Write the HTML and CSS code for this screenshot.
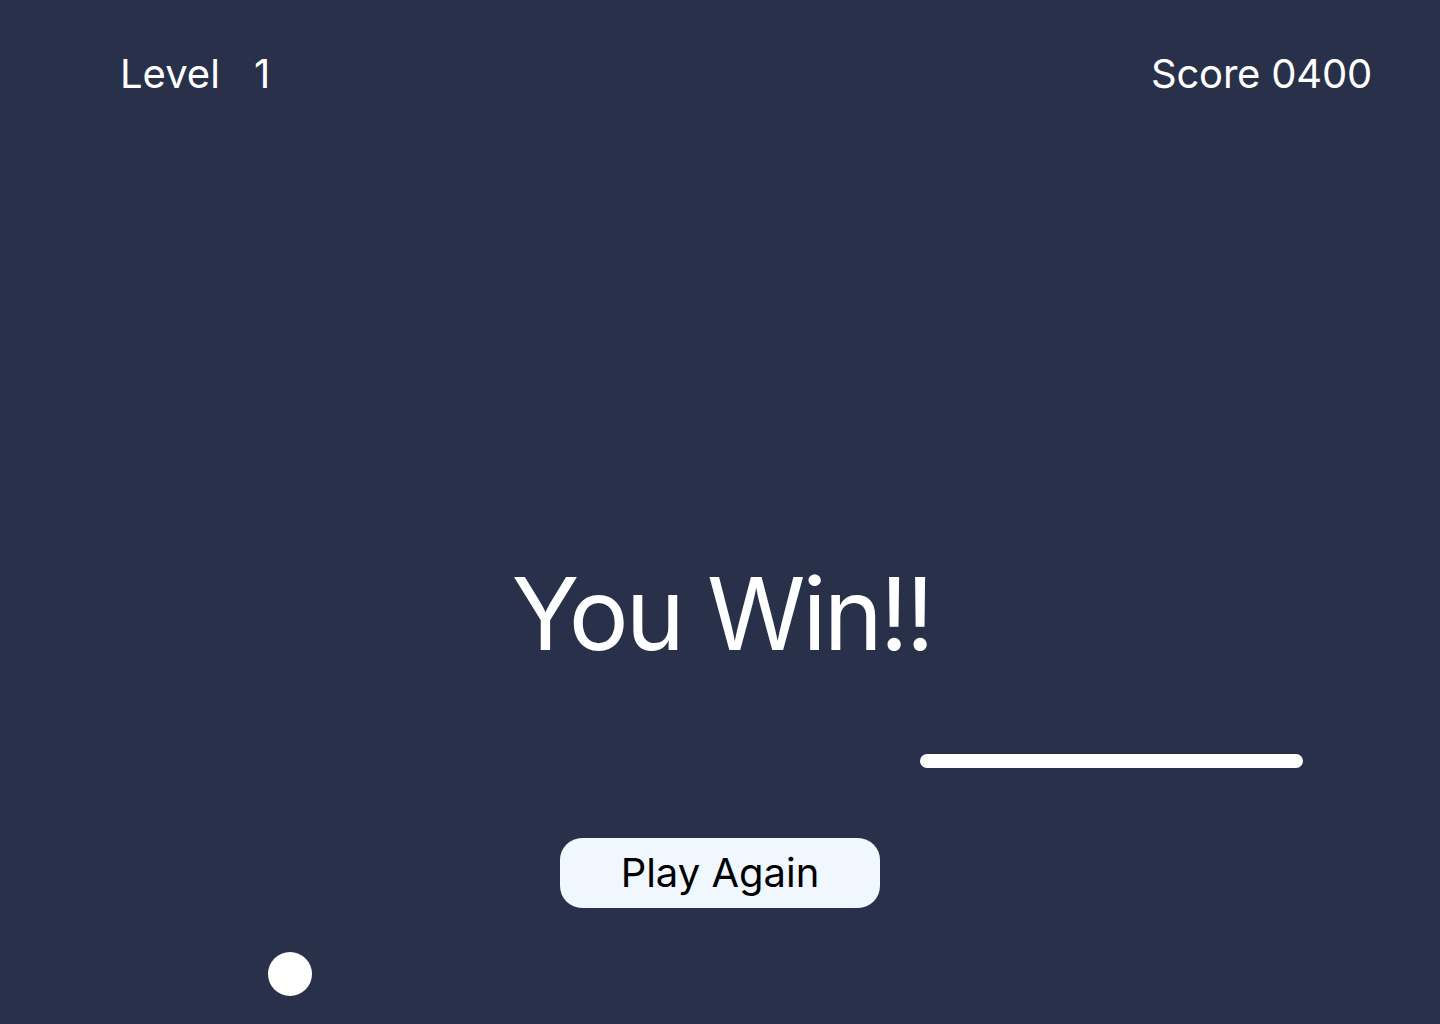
FILE: index.html
```html
<!DOCTYPE html>
<html lang="en">
<head>
<meta charset="utf-8">
<title>You Win</title>
<link rel="stylesheet" href="styles.css">
</head>
<body>
<main class="game">
  <header class="hud">
    <div class="hud-level"><span>Level</span><span>1</span></div>
    <div class="hud-score">Score 0400</div>
  </header>
  <section class="result">
    <h1 class="result-title">You Win!!</h1>
    <button class="btn-again" type="button">Play Again</button>
  </section>
  <div class="paddle"></div>
  <div class="ball"></div>
</main>
</body>
</html>
```

FILE: styles.css
```css
* { box-sizing: border-box; }
html, body { margin: 0; padding: 0; }
body {
  background: #29304a;
  font-family: Inter, "Noto Sans", sans-serif;
  color: #ffffff;
}
.game {
  position: relative;
  width: 1440px;
  height: 1024px;
  overflow: hidden;
}
.hud {
  display: flex;
  justify-content: space-between;
  padding: 54px 68px 0 120px;
  font-size: 40px;
  line-height: 40px;
}
.hud-level {
  display: flex;
  gap: 34px;
}
.hud-score {
  letter-spacing: -0.2px;
}
.result {
  display: flex;
  flex-direction: column;
  align-items: center;
  padding-top: 470px;
}
.result-title {
  margin: 0;
  padding-left: 3px;
  font-weight: 400;
  font-size: 100px;
  line-height: 100px;
  letter-spacing: -3px;
}
.btn-again {
  margin-top: 174px;
  width: 320px;
  height: 70px;
  border: none;
  border-radius: 22px;
  background: #f0f7fe;
  color: #000000;
  font-family: Inter, "Noto Sans", sans-serif;
  font-size: 40px;
  line-height: 40px;
  padding: 0;
  display: flex;
  align-items: center;
  justify-content: center;
}
.paddle {
  position: absolute;
  left: 920px;
  top: 754px;
  width: 383px;
  height: 14px;
  border-radius: 7px;
  background: #ffffff;
}
.ball {
  position: absolute;
  left: 268px;
  top: 952px;
  width: 44px;
  height: 44px;
  border-radius: 50%;
  background: #ffffff;
}
```
